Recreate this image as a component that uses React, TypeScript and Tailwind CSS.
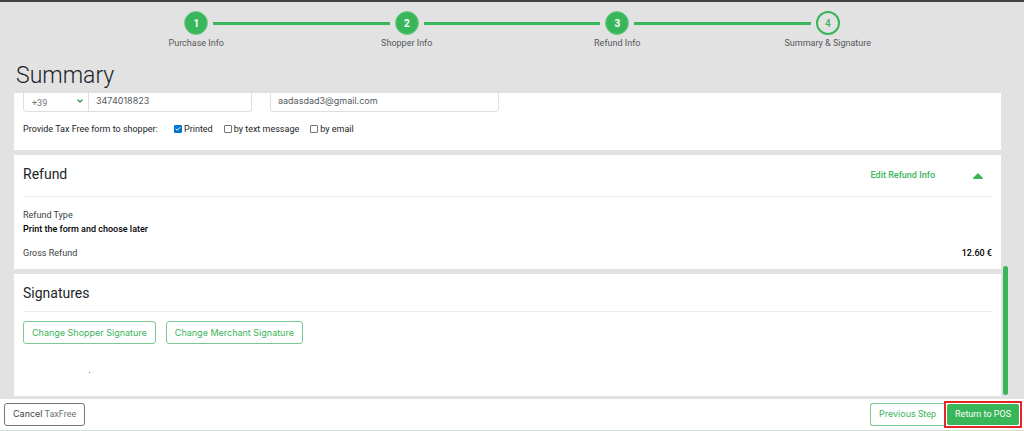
import { Check, ChevronDown } from "lucide-react";
import clsx from "clsx";
import type { ReactNode } from "react";

const steps = [
  "Purchase Info",
  "Shopper Info",
  "Refund Info",
  "Summary & Signature",
];

const deliveryOptions = [
  { id: "printed", label: "Printed", checked: true },
  { id: "text-message", label: "by text message", checked: false },
  { id: "email-form", label: "by email", checked: false },
];

function Stepper({ current }: { current: number }) {
  return (
    <ol className="mx-auto grid w-full max-w-[842px] grid-cols-4 pt-[9px]">
      {steps.map((label, index) => {
        const active = index + 1 === current;
        return (
          <li key={label} className="text-center">
            <div className="flex items-center gap-[5px]">
              <span
                className={clsx("h-[3px] flex-1", index > 0 && "bg-[#39b55a]")}
              />
              <span
                className={clsx(
                  "flex size-6 items-center justify-center rounded-full text-[10px]",
                  active
                    ? "border-2 border-[#39b55a] font-medium text-[#39b55a]"
                    : "border border-[#7bcb90] bg-[#39b55a] font-bold text-white"
                )}
              >
                {index + 1}
              </span>
              <span
                className={clsx(
                  "h-[3px] flex-1",
                  index < steps.length - 1 && "bg-[#39b55a]"
                )}
              />
            </div>
            <p className="text-[9px] leading-4 text-[#55585b]">{label}</p>
          </li>
        );
      })}
    </ol>
  );
}

function Card({ children }: { children: ReactNode }) {
  return <section className="bg-white px-[9px]">{children}</section>;
}

function DeliveryOption({
  id,
  label,
  checked,
}: {
  id: string;
  label: string;
  checked: boolean;
}) {
  return (
    <span className="flex items-center gap-[2px]">
      <span className="grid">
        <input
          id={id}
          type="checkbox"
          defaultChecked={checked}
          className="peer col-start-1 row-start-1 size-2 appearance-none rounded-[1px] border border-[#767676] bg-white checked:border-[#0075d0] checked:bg-[#0075d0]"
        />
        <Check
          strokeWidth={4}
          className="pointer-events-none invisible col-start-1 row-start-1 size-2 p-px text-white peer-checked:visible"
        />
      </span>
      <label htmlFor={id}>{label}</label>
    </span>
  );
}

export default function App() {
  return (
    <div className="flex min-h-screen flex-col border-t-2 border-[#444243] bg-[#e2e2e2] font-['Roboto',sans-serif] text-[9px] text-[#212529]">
      <Stepper current={4} />
      <h1 className="mt-[9px] mb-px px-4 text-[23px] leading-8 font-light">
        Summary
      </h1>

      <main className="flex gap-[2px] pr-4 pl-[14px]">
        <div className="flex min-w-0 flex-1 flex-col gap-[5px]">
          <Card>
            <div className="flex gap-[18px] font-['Inter',sans-serif] text-[#555a60]">
              <div className="flex h-[19px] w-[229px] rounded-b-sm border border-t-0 border-[#dcdfe3]">
                <div className="grid w-[65px] items-center border-r border-[#dcdfe3]">
                  <select
                    aria-label="Country code"
                    defaultValue="+39"
                    className="col-start-1 row-start-1 appearance-none px-2 pt-1 font-['Roboto',sans-serif] text-[#6c7278]"
                  >
                    <option>+39</option>
                    <option>+44</option>
                  </select>
                  <ChevronDown
                    strokeWidth={4}
                    className="pointer-events-none col-start-1 row-start-1 mr-1 mb-[2px] size-2 justify-self-end text-[#2f9e4a]"
                  />
                </div>
                <input
                  aria-label="Phone number"
                  type="tel"
                  defaultValue="3474018823"
                  className="min-w-0 flex-1 px-[7px] pb-[3px]"
                />
              </div>
              <input
                aria-label="Email"
                type="email"
                defaultValue="aadasdad3@gmail.com"
                className="h-[19px] w-[229px] rounded-b-sm border border-t-0 border-[#dcdfe3] px-[7px] pb-1"
              />
            </div>
            <div className="flex items-center gap-[11px] pt-[10px] pb-[14px] leading-[14px]">
              <span className="w-[140px]">Provide Tax Free form to shopper:</span>
              {deliveryOptions.map((option) => (
                <DeliveryOption key={option.id} {...option} />
              ))}
            </div>
          </Card>

          <Card>
            <div className="flex h-[42px] items-center border-b border-[#eeeeee]">
              <h2 className="flex-1 pb-[2px] text-[14px]">Refund</h2>
              <a href="#refund" className="font-medium text-[#39b55a]">
                Edit Refund Info
              </a>
              <button
                type="button"
                aria-label="Collapse refund"
                className="mr-[9px] ml-[38px] text-[#39b55a]"
              >
                <svg viewBox="0 0 10 6" className="h-[6px] w-[10px]">
                  <path d="M5 0 10 5Q10 6 9 6H1Q0 6 0 5Z" fill="currentColor" />
                </svg>
              </button>
            </div>
            <dl className="pt-[11px] pb-[9px] leading-[14px]">
              <dt className="text-[#3c4044]">Refund Type</dt>
              <dd className="font-medium text-black">
                Print the form and choose later
              </dd>
              <div className="flex justify-between pt-[10px]">
                <dt className="text-[#3c4044]">Gross Refund</dt>
                <dd className="font-medium text-black">12.60 €</dd>
              </div>
            </dl>
          </Card>

          <Card>
            <h2 className="flex h-[38px] items-center border-b border-[#eeeeee] pt-[2px] text-[14px]">
              Signatures
            </h2>
            <div className="flex gap-[10px] pt-[9px] font-['Inter',sans-serif] text-[#39b55a]">
              <button
                type="button"
                className="h-[23px] rounded-[3px] border border-[#7bcb90] px-2"
              >
                Change Shopper Signature
              </button>
              <button
                type="button"
                className="h-[23px] rounded-[3px] border border-[#7bcb90] px-2"
              >
                Change Merchant Signature
              </button>
            </div>
            <div className="h-[52px] px-[66px] pt-[28px]">
              <span className="block size-px bg-[#777777]" />
            </div>
          </Card>
        </div>
        <div className="mb-px h-[129px] w-[5px] self-end rounded-full bg-[#39b55a]" />
      </main>

      <footer className="mt-[3px] flex items-center justify-between border-b border-[#d3dddc] bg-white pr-[2px] pl-1">
        <button
          type="button"
          className="h-[23px] rounded-[3px] border border-[#777777] px-2 text-[#6c7278]"
        >
          <span className="font-['Inter',sans-serif] text-[#444444]">
            Cancel
          </span>{" "}
          TaxFree
        </button>
        <div className="flex items-center">
          <button
            type="button"
            className="h-[23px] rounded-l-[3px] border border-r-0 border-[#7bcb90] px-2 text-[#39b55a]"
          >
            <span className="font-['Inter',sans-serif]">Previous</span> Step
          </button>
          <div className="my-[2px] border-2 border-[#e52528] bg-white p-px">
            <button
              type="button"
              className="block h-[21px] rounded-[2px] bg-[#39b55a] px-2 text-white"
            >
              Return to POS
            </button>
          </div>
        </div>
      </footer>
    </div>
  );
}
